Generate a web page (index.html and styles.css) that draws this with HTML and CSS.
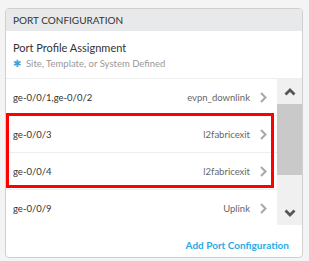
FILE: index.html
```html
<!DOCTYPE html>
<html lang="en">
<head>
    <meta charset="UTF-8">
    <title>Port Configuration</title>
    <link rel="stylesheet" href="styles.css">
</head>
<body>
    <div class="card">
        <div class="card-header">Port Configuration</div>
        <div class="section">
            <div class="section-title">Port Profile Assignment</div>
            <div class="section-note"><span class="star">&#10033;</span>Site, Template, or System Defined</div>
        </div>
        <div class="list-wrap">
            <div class="list">
                <div class="row">
                    <span class="port">ge-0/0/1,ge-0/0/2</span>
                    <span class="profile">evpn_downlink</span>
                    <svg class="chev" width="7" height="11" viewBox="0 0 7 11"><path d="M1 1l4.5 4.5L1 10" fill="none" stroke="#a8a8a8" stroke-width="2"/></svg>
                </div>
                <div class="row">
                    <span class="port">ge-0/0/3</span>
                    <span class="profile">l2fabricexit</span>
                    <svg class="chev" width="7" height="11" viewBox="0 0 7 11"><path d="M1 1l4.5 4.5L1 10" fill="none" stroke="#a8a8a8" stroke-width="2"/></svg>
                </div>
                <div class="row">
                    <span class="port">ge-0/0/4</span>
                    <span class="profile">l2fabricexit</span>
                    <svg class="chev" width="7" height="11" viewBox="0 0 7 11"><path d="M1 1l4.5 4.5L1 10" fill="none" stroke="#a8a8a8" stroke-width="2"/></svg>
                </div>
                <div class="row">
                    <span class="port">ge-0/0/9</span>
                    <span class="profile">Uplink</span>
                    <svg class="chev" width="7" height="11" viewBox="0 0 7 11"><path d="M1 1l4.5 4.5L1 10" fill="none" stroke="#a8a8a8" stroke-width="2"/></svg>
                </div>
            </div>
            <div class="scrollbar">
                <div class="scroll-btn">
                    <svg width="12" height="8" viewBox="0 0 12 8"><path d="M1.5 6.5L6 2l4.5 4.5" fill="none" stroke="#555" stroke-width="2.8"/></svg>
                </div>
                <div class="scroll-thumb"></div>
                <div class="scroll-track"></div>
                <div class="scroll-btn">
                    <svg width="12" height="8" viewBox="0 0 12 8"><path d="M1.5 1.5L6 6l4.5-4.5" fill="none" stroke="#555" stroke-width="2.8"/></svg>
                </div>
            </div>
            <div class="highlight"></div>
        </div>
        <div class="card-footer">
            <a class="add-link" href="#">Add Port Configuration</a>
        </div>
    </div>
</body>
</html>
```

FILE: styles.css
```css
body {
    margin: 0;
    padding: 8px 6px 0 5px;
    background-color: #f4f4f4;
    font-family: Lato, 'Open Sans', sans-serif;
    color: #333;
}
.card {
    width: 296px;
    height: 248px;
    background-color: #fff;
    border: 1px solid #cfcfcf;
    border-radius: 4px;
    display: flex;
    flex-direction: column;
    overflow: hidden;
}
.card-header {
    height: 22px;
    line-height: 22px;
    padding-left: 7px;
    background-color: #e8e9ea;
    font-size: 10px;
    text-transform: uppercase;
    color: #333;
}
.section {
    padding: 9px 7px 7px;
}
.section-title {
    font-size: 11px;
    line-height: 16px;
    color: #333;
}
.section-note {
    font-size: 9.5px;
    line-height: 14px;
    color: #999;
}
.star {
    color: #3fa3d8;
    font-size: 10px;
    margin-right: 5px;
}
.list-wrap {
    display: flex;
    height: 146px;
    border-top: 1px solid #eee;
    position: relative;
}
.list {
    flex: 1;
    overflow: hidden;
}
.row {
    height: 36px;
    border-bottom: 1px solid #eee;
    display: flex;
    align-items: center;
    padding: 0 10px 0 7px;
    font-size: 9.5px;
}
.port {
    flex: 1;
    color: #333;
}
.profile {
    color: #666;
    margin-right: 10px;
}
.scrollbar {
    width: 25px;
    display: flex;
    flex-direction: column;
    background-color: #f0f0f0;
}
.scroll-btn {
    height: 25px;
    display: flex;
    align-items: center;
    justify-content: center;
}
.scroll-thumb {
    height: 71px;
    background-color: #c9c9c9;
}
.scroll-track {
    flex: 1;
}
.highlight {
    position: absolute;
    left: 0;
    top: 34px;
    width: 262px;
    height: 69px;
    border: 3px solid #f00;
}
.card-footer {
    flex: 1;
    text-align: right;
    padding: 8px 13px 0 0;
}
.add-link {
    font-size: 10px;
    font-weight: bold;
    line-height: 14px;
    color: #29abe2;
    text-decoration: none;
}
```
